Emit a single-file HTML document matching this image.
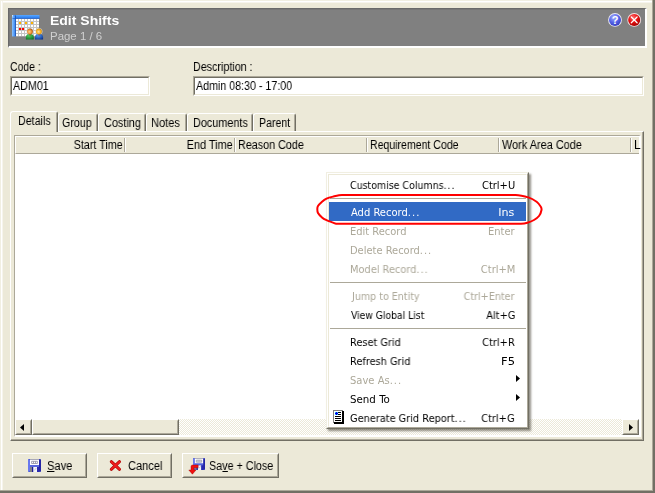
<!DOCTYPE html>
<html lang="en"><head><meta charset="utf-8"><title>Edit Shifts</title>
<style>
html,body{margin:0;padding:0}
body{width:655px;height:493px;background:#ece9d8;position:relative;overflow:hidden;font-family:'Liberation Sans', sans-serif;font-size:12px;color:#000}
.a{position:absolute}
.t{position:absolute;white-space:nowrap;line-height:normal;display:block;transform-origin:0 0;will-change:transform}
.t.r{transform-origin:100% 0}
.s11{font-size:11px}.s13{font-size:13px;font-weight:bold}
.tah{font-family:'DejaVu Sans Condensed', 'DejaVu Sans', 'Liberation Sans', sans-serif;font-size:11px}
.t i{font-style:normal;letter-spacing:1px;margin-right:-1px}
.t u{text-decoration:none;position:relative}
.t u:after{content:"";position:absolute;left:0;right:0;top:12px;height:1px;background:#000}
.sunk{position:absolute;background:#fff;box-sizing:border-box;border:1px solid;border-color:#aca899 #fff #fff #aca899}
.sunk:before{content:"";position:absolute;left:0;top:0;right:0;bottom:0;border:1px solid;border-color:#716f64 #ece9d8 #ece9d8 #716f64}
.btn{position:absolute;box-sizing:border-box;height:25px;top:453px;background:#ece9d8;border:1px solid;border-color:#fff #716f64 #716f64 #fff}
.btn:before{content:"";position:absolute;left:0;top:0;right:0;bottom:0;border:1px solid;border-color:#ece9d8 #aca899 #aca899 #ece9d8}
.tab{position:absolute;box-sizing:border-box;background:#ece9d8;border-top:1px solid #fff;border-left:1px solid #fff;border-right:1px solid #716f64;border-radius:3px 3px 0 0}
.tab:before{content:"";position:absolute;top:1px;bottom:0;right:0;width:1px;background:#aca899}
.sep{position:absolute;top:138px;width:1px;height:14px;background:#aca899;box-shadow:1px 0 0 #fff}
.msep{position:absolute;left:330px;width:196px;height:1px;background:#aca899}
.chk{background-color:#fff;background-image:linear-gradient(45deg,#ece9d8 25%,transparent 25%,transparent 75%,#ece9d8 75%),linear-gradient(45deg,#ece9d8 25%,transparent 25%,transparent 75%,#ece9d8 75%);background-size:2px 2px;background-position:0 0,1px 1px}
</style></head><body>
<!-- window frame -->
<div class="a" style="left:0;top:0;width:655px;height:1px;background:#f1efe2"></div>
<div class="a" style="left:0;top:0;width:1px;height:493px;background:#f1efe2"></div>
<div class="a" style="left:1px;top:1px;width:654px;height:2px;background:linear-gradient(#fff 50%,#f6f4ec 50%)"></div>
<div class="a" style="left:1px;top:1px;width:2px;height:492px;background:linear-gradient(90deg,#fff 50%,#f6f4ec 50%)"></div>
<div class="a" style="left:652px;top:0;width:1px;height:493px;background:#aca899"></div>
<div class="a" style="left:653px;top:0;width:2px;height:493px;background:#716f64"></div>
<div class="a" style="left:0;top:490px;width:653px;height:1px;background:#aca899"></div>
<div class="a" style="left:0;top:491px;width:655px;height:2px;background:#716f64"></div>

<!-- header -->
<div class="a" id="hdr" style="left:8px;top:8px;width:639px;height:40px;box-sizing:border-box;background:#808080;border-style:solid;border-width:1px 2px 2px 1px;border-color:#696969 #fff #fff #696969;box-shadow:inset 1px 1px 0 #777"></div>
<svg class="a" style="left:12px;top:15px" width="32" height="26" viewBox="0 0 32 26">
  <defs>
    <linearGradient id="cb" x1="0" y1="0" x2="1" y2="0"><stop offset="0" stop-color="#8cc4ff"/><stop offset="1" stop-color="#2f7ff0"/></linearGradient>
    <linearGradient id="ct" x1="0" y1="0" x2="0" y2="1"><stop offset="0" stop-color="#5aa8ff"/><stop offset="1" stop-color="#1f74ee"/></linearGradient>
    <radialGradient id="pg" cx="0.4" cy="0.3" r="0.8"><stop offset="0" stop-color="#4cd060"/><stop offset="1" stop-color="#0c6c20"/></radialGradient>
    <radialGradient id="pb" cx="0.4" cy="0.3" r="0.8"><stop offset="0" stop-color="#4c98f0"/><stop offset="1" stop-color="#0c3088"/></radialGradient>
    <radialGradient id="h1g" cx="0.4" cy="0.55" r="0.6"><stop offset="0" stop-color="#ffd090"/><stop offset="0.6" stop-color="#e89030"/><stop offset="1" stop-color="#a85010"/></radialGradient>
    <radialGradient id="h2g" cx="0.45" cy="0.55" r="0.6"><stop offset="0" stop-color="#ffe0a0"/><stop offset="0.6" stop-color="#f4b020"/><stop offset="1" stop-color="#c88000"/></radialGradient>
  </defs>
  <rect x="0" y="0" width="27.5" height="22" fill="#7a7a7a"/>
  <rect x="3" y="3" width="24" height="18.5" fill="#c4c4c4"/>
  <rect x="0" y="0" width="27.5" height="3.5" fill="url(#ct)"/>
  <rect x="0" y="0" width="3.5" height="21.5" fill="url(#cb)"/>
  <rect x="0" y="0" width="1" height="1.5" fill="#c8e4ff"/>
  <rect x="3" y="0.5" width="0.8" height="21" fill="#1450b8"/>
  <rect x="0.5" y="3" width="27" height="0.8" fill="#1450b8" opacity=".7"/>
  <g fill="#fff"><rect x="4" y="4" width="2" height="2"/><rect x="7" y="4" width="2" height="2"/><rect x="10" y="4" width="2" height="2"/><rect x="13" y="4" width="2" height="2"/><rect x="16" y="4" width="2" height="2"/><rect x="19" y="4" width="2" height="2"/><rect x="22" y="4" width="2" height="2"/><rect x="25" y="4" width="2" height="2"/><rect x="4" y="7" width="2" height="2"/><rect x="10" y="7" width="2" height="2"/><rect x="16" y="7" width="2" height="2"/><rect x="22" y="7" width="2" height="2"/><rect x="25" y="7" width="2" height="2"/><rect x="4" y="10" width="2" height="2"/><rect x="7" y="10" width="2" height="2"/><rect x="10" y="10" width="2" height="2"/><rect x="13" y="10" width="2" height="2"/><rect x="16" y="10" width="2" height="2"/><rect x="19" y="10" width="2" height="2"/><rect x="22" y="10" width="2" height="2"/><rect x="25" y="10" width="2" height="2"/><rect x="4" y="13" width="2" height="2"/><rect x="13" y="13" width="2" height="2"/><rect x="16" y="13" width="2" height="2"/><rect x="19" y="13" width="2" height="2"/><rect x="22" y="13" width="2" height="2"/><rect x="25" y="13" width="2" height="2"/><rect x="4" y="16" width="2" height="2"/><rect x="7" y="16" width="2" height="2"/><rect x="10" y="16" width="2" height="2"/><rect x="13" y="16" width="2" height="2"/><rect x="16" y="16" width="2" height="2"/><rect x="19" y="16" width="2" height="2"/><rect x="22" y="16" width="2" height="2"/><rect x="25" y="16" width="2" height="2"/><rect x="4" y="19" width="2" height="2"/><rect x="7" y="19" width="2" height="2"/><rect x="10" y="19" width="2" height="2"/><rect x="13" y="19" width="2" height="2"/><rect x="16" y="19" width="2" height="2"/><rect x="19" y="19" width="2" height="2"/><rect x="22" y="19" width="2" height="2"/><rect x="25" y="19" width="2" height="2"/></g>
  <g fill="#ffb400"><rect x="7" y="7" width="2" height="2"/><rect x="13" y="7" width="2" height="2"/><rect x="19" y="7" width="2" height="2"/></g>
  <g fill="#f00"><rect x="7" y="13" width="2" height="2"/><rect x="10" y="13" width="2" height="2"/></g>
  <!-- people -->
  <circle cx="18" cy="16.5" r="3.6" fill="#d8d8d8" opacity=".8"/>
  <circle cx="26.9" cy="16.5" r="3.6" fill="#d8d8d8" opacity=".8"/>
  <path d="M13.9 24.6 V22 Q13.9 19 18 19 Q21.8 19 21.8 22 V24.6 Z" fill="url(#pg)"/>
  <path d="M23 24.6 V22 Q23 19 27 19 Q31.1 19 31.1 22 V24.6 Z" fill="url(#pb)"/>
  <path d="M17.4 19.2 L18 21.4 L18.6 19.2 Z" fill="#d02010"/>
  <path d="M26.4 19.2 L27 21.4 L27.6 19.2 Z" fill="#d02010"/>
  <circle cx="18" cy="16.5" r="2.9" fill="url(#h1g)"/>
  <circle cx="26.9" cy="16.5" r="2.9" fill="url(#h2g)"/>
</svg>
<!-- help / close -->
<svg class="a" style="left:607px;top:12px" width="36" height="16" viewBox="0 0 36 16">
  <defs>
    <radialGradient id="gb" cx="0.4" cy="0.3" r="0.75"><stop offset="0" stop-color="#a4aeff"/><stop offset="0.55" stop-color="#5664e8"/><stop offset="1" stop-color="#343cbc"/></radialGradient>
    <radialGradient id="gr" cx="0.4" cy="0.3" r="0.75"><stop offset="0" stop-color="#ff7070"/><stop offset="0.5" stop-color="#e81010"/><stop offset="1" stop-color="#a00000"/></radialGradient>
  </defs>
  <circle cx="8" cy="7.9" r="6.9" fill="#e8e8f4"/>
  <circle cx="8" cy="7.9" r="6" fill="url(#gb)"/>
  <text x="8" y="12" text-anchor="middle" font-family="'Liberation Sans', sans-serif" font-weight="bold" font-size="11" fill="#fff">?</text>
  <circle cx="27.2" cy="7.9" r="6.9" fill="#f0e0e0"/>
  <circle cx="27.2" cy="7.9" r="6" fill="url(#gr)"/>
  <path d="M24.3 5 L30.1 10.8 M30.1 5 L24.3 10.8" stroke="#fff" stroke-width="1.25" stroke-linecap="round"/>
</svg>

<!-- inputs -->
<div class="sunk" style="left:10px;top:76px;width:140px;height:20px"></div>
<div class="sunk" style="left:193px;top:76px;width:451px;height:20px"></div>

<!-- tab panel -->
<div class="a" id="panel" style="left:10px;top:131px;width:634px;height:310px;box-sizing:border-box;border:1px solid;border-color:#fff #716f64 #716f64 #fff"></div>
<div class="a" style="left:11px;top:439px;width:632px;height:1px;background:#aca899"></div>
<div class="a" style="left:642px;top:132px;width:1px;height:308px;background:#aca899"></div>
<!-- tabs -->
<div class="tab" style="left:58px;top:113px;width:40px;height:18px"></div>
<div class="tab" style="left:98px;top:113px;width:48px;height:18px"></div>
<div class="tab" style="left:146px;top:113px;width:41px;height:18px"></div>
<div class="tab" style="left:187px;top:113px;width:66px;height:18px"></div>
<div class="tab" style="left:253px;top:113px;width:43px;height:18px"></div>
<div class="tab" style="left:10px;top:111px;width:48px;height:21px"></div>

<!-- grid -->
<div class="a" id="grid" style="left:14px;top:135px;width:627px;height:302px;box-sizing:border-box;background:#fff;border-style:solid;border-width:1px 2px 2px 1px;border-color:#aca899 #fff #fff #aca899"></div>
<div class="a" style="left:15px;top:136px;width:624px;height:18px;box-sizing:border-box;background:#ece9d8;border-top:1px solid #fff;border-left:1px solid #fff;border-bottom:1px solid #aca899"></div>
<div class="sep" style="left:124px"></div>
<div class="sep" style="left:234px"></div>
<div class="sep" style="left:366px"></div>
<div class="sep" style="left:498px"></div>
<div class="sep" style="left:630px"></div>
<!-- scrollbar -->
<div class="a chk" style="left:15px;top:419px;width:624px;height:16px"></div>
<div class="btn" style="left:15px;top:419px;width:17px;height:16px"></div>
<div class="btn" style="left:32px;top:419px;width:147px;height:16px"></div>
<div class="btn" style="left:622px;top:419px;width:17px;height:16px"></div>
<svg class="a" style="left:20px;top:424px" width="4" height="7" viewBox="0 0 4 7"><path d="M4 0 L4 7 L0 3.5 Z" fill="#000"/></svg>
<svg class="a" style="left:629px;top:424px" width="4" height="7" viewBox="0 0 4 7"><path d="M0 0 L0 7 L4 3.5 Z" fill="#000"/></svg>

<!-- buttons -->
<div class="btn" style="left:12px;width:75px"></div>
<div class="btn" style="left:97px;width:75px"></div>
<div class="btn" style="left:182px;width:97px"></div>
<!-- save icon -->
<svg class="a" style="left:28px;top:459px" width="13" height="13" viewBox="0 0 13 13">
  <rect x="0" y="0" width="13" height="13" rx="1.2" fill="#3c4acc"/>
  <rect x="0" y="0.6" width="2" height="11.8" fill="#6878ee"/>
  <rect x="11" y="0.6" width="2" height="11.8" fill="#2626a6"/>
  <rect x="2" y="0" width="9" height="6" fill="#fff"/>
  <rect x="2" y="0" width="9" height="0.9" fill="#a0a0b0"/>
  <path d="M3.6 2.3 H9.4 V4.5 H3.6 Z M5.5 2.3 V4.5 M7.5 2.3 V4.5" fill="none" stroke="#8e8ea2" stroke-width="0.8"/>
  <rect x="2" y="6" width="9" height="2" fill="#5666dc"/>
  <rect x="2" y="8" width="2" height="5" fill="#80808a"/>
  <rect x="4" y="8" width="1.3" height="5" fill="#1c1c94"/>
  <rect x="5.3" y="8" width="3.7" height="5" fill="#f4f4f8"/>
  <path d="M6.2 11.5 L8.3 9" stroke="#b0b0c0" stroke-width="0.7"/>
  <rect x="9" y="8" width="2" height="5" fill="#2a2ab0"/>
</svg>
<!-- cancel icon -->
<svg class="a" style="left:109px;top:459px" width="13" height="13" viewBox="0 0 13 13">
  <path d="M2.3 2.7 L10.5 10.3 M10.5 2.7 L2.3 10.3" stroke="#a80000" stroke-width="3" stroke-linecap="round"/>
  <path d="M2.3 2.7 L10.5 10.3 M10.5 2.7 L2.3 10.3" stroke="#ee1c1c" stroke-width="1.9" stroke-linecap="round"/>
</svg>
<!-- save+close icon -->
<svg class="a" style="left:188px;top:458px" width="18" height="17" viewBox="0 0 18 17">
  <g transform="translate(5,0) scale(0.923)">
  <rect x="0" y="0" width="13" height="13" rx="1.2" fill="#3c4acc"/>
  <rect x="0" y="0.6" width="2" height="11.8" fill="#6878ee"/>
  <rect x="11" y="0.6" width="2" height="11.8" fill="#2626a6"/>
  <rect x="2" y="0" width="9" height="6" fill="#fff"/>
  <rect x="2" y="0" width="9" height="0.9" fill="#a0a0b0"/>
  <path d="M3.6 2.3 H9.4 V4.5 H3.6 Z M5.5 2.3 V4.5 M7.5 2.3 V4.5" fill="none" stroke="#8e8ea2" stroke-width="0.8"/>
  <rect x="2" y="6" width="9" height="2" fill="#5666dc"/>
  <rect x="2" y="8" width="2" height="5" fill="#80808a"/>
  <rect x="4" y="8" width="1.3" height="5" fill="#1c1c94"/>
  <rect x="5.3" y="8" width="3.7" height="5" fill="#f4f4f8"/>
  <path d="M6.2 11.5 L8.3 9" stroke="#b0b0c0" stroke-width="0.7"/>
  <rect x="9" y="8" width="2" height="5" fill="#2a2ab0"/>
  </g>
  <path d="M10.2 7 H4.5 Q3 7 3 8.5 V12 H0.8 L4.4 16.2 L8 12 H6 V9.8 H10.2 Z" fill="#f01010" stroke="#a00000" stroke-width="0.4"/>
</svg>

<!-- popup menu -->
<div class="a" id="menu" style="left:326px;top:172px;width:203px;height:257px;box-sizing:border-box;background:#fff;border:1px solid;border-color:#f1efe2 #716f64 #716f64 #f1efe2;box-shadow:2px 2px 2px rgba(60,55,40,.55)">
  <div class="a" style="left:0;top:0;right:0;bottom:0;border:1px solid;border-color:#fff #aca899 #aca899 #fff"></div>
  <div class="a" style="left:1px;top:1px;right:1px;bottom:1px;border:1px solid #ece9d8;border-right-color:#fff;border-bottom-color:#fff"></div>
</div>
<div class="a" style="left:329px;top:202px;width:197px;height:19px;background:#316ac5"></div>
<div class="msep" style="top:198px"></div>
<div class="msep" style="top:282px"></div>
<div class="msep" style="top:328px"></div>
<svg class="a" style="left:516px;top:375px" width="4" height="7" viewBox="0 0 4 7"><path d="M0 0 L0 7 L4 3.5 Z" fill="#000"/></svg>
<svg class="a" style="left:516px;top:394px" width="4" height="7" viewBox="0 0 4 7"><path d="M0 0 L0 7 L4 3.5 Z" fill="#000"/></svg>
<!-- report icon -->
<svg class="a" style="left:333px;top:410px" width="11" height="14" viewBox="0 0 11 14">
  <rect x="1" y="1" width="10" height="13" fill="#000"/>
  <rect x="0" y="0" width="10" height="13" fill="#808080"/>
  <rect x="1" y="1" width="8" height="11" fill="#fff"/>
  <rect x="9" y="1" width="1" height="12" fill="#000"/><rect x="1" y="12" width="9" height="1" fill="#000"/>
  <g fill="#000"><rect x="5" y="2" width="3" height="1"/><rect x="5" y="4" width="3" height="1"/><rect x="2" y="6" width="6" height="1"/><rect x="2" y="8" width="6" height="1"/><rect x="2" y="10" width="6" height="1"/></g>
  <rect x="2" y="2" width="3" height="3" fill="#20c0ff"/><rect x="3" y="2" width="1" height="3" fill="#0000e0"/><rect x="2" y="3" width="3" height="1" fill="#0000e0"/>
</svg>
<!-- red highlight ellipse -->
<svg class="a" style="left:314px;top:192px" width="230" height="35" viewBox="0 0 230 35">
  <path d="M28 2.9 L120 2.9 L201.6 2.9 C205.6 2.9 212.2 4.7 215 5.6 C217.8 6.5 221.0 8.6 222.6 9.8 C224.2 11.0 226.1 13.7 226.8 14.8 C227.5 15.9 227.7 16.8 227.5 18 C227.3 19.2 226.0 22.7 225 24 C224.0 25.3 221.5 27.1 220 28 C218.5 28.9 215.1 30.3 213.4 30.8 C211.7 31.3 208.9 31.7 207 31.7 L120 31.7 L22 31.7 C21.1 31.7 20.3 31.1 19 30.6 C17.7 30.1 14.0 28.9 12.5 28.2 C11.0 27.5 9.1 26.5 8 25.5 C6.9 24.5 4.6 22.1 4 21 C3.4 19.9 3.3 17.9 3.3 17 C3.3 16.1 3.4 15.0 4 14 C4.6 13.0 6.9 10.8 8 9.8 C9.1 8.8 11.0 7.3 12.5 6.6 C14.0 5.9 16.9 5.1 19 4.6 C21.1 4.1 25.3 2.9 28 2.9 Z" fill="none" stroke="#f00" stroke-width="2" stroke-linejoin="round"/>
</svg>

<span class="t s13" id="title" style="left:50px;top:13px;color:#fff;transform:scaleX(1.076)">Edit Shifts</span>
<span class="t s11" id="page" style="left:50px;top:30px;color:#d0d0d0;transform:scaleX(1.041)">Page 1 / 6</span>
<span class="t" id="lcode" style="left:10px;top:60px;transform:scaleX(0.870)">Code :</span>
<span class="t" id="ldesc" style="left:193px;top:60px;transform:scaleX(0.894)">Description :</span>
<span class="t" id="vcode" style="left:13px;top:79px;transform:scaleX(0.893)">ADM01</span>
<span class="t" id="vdesc" style="left:196px;top:79px;transform:scaleX(0.889)">Admin 08:30 - 17:00</span>
<span class="t" id="tab1" style="left:18px;top:114px;transform:scaleX(0.892)">Details</span>
<span class="t" id="tab2" style="left:62px;top:116px;transform:scaleX(0.890)">Group</span>
<span class="t" id="tab3" style="left:104px;top:116px;transform:scaleX(0.907)">Costing</span>
<span class="t" id="tab4" style="left:151px;top:116px;transform:scaleX(0.923)">Notes</span>
<span class="t" id="tab5" style="left:193px;top:116px;transform:scaleX(0.904)">Documents</span>
<span class="t" id="tab6" style="left:259px;top:116px;transform:scaleX(0.882)">Parent</span>
<span class="t r" id="h1" style="right:532px;top:138px;transform:scaleX(0.896)">Start Time</span>
<span class="t r" id="h2" style="right:422px;top:138px;transform:scaleX(0.908)">End Time</span>
<span class="t" id="h3" style="left:238px;top:138px;transform:scaleX(0.897)">Reason Code</span>
<span class="t" id="h4" style="left:370px;top:138px;transform:scaleX(0.879)">Requirement Code</span>
<span class="t" id="h5" style="left:502px;top:138px;transform:scaleX(0.909)">Work Area Code</span>
<span class="t" id="h6" style="left:634px;top:138px">L</span>
<span class="t" id="b1" style="left:47px;top:459px;transform:scaleX(0.927)"><u>S</u>ave</span>
<span class="t" id="b2" style="left:128px;top:459px;transform:scaleX(0.922)">Cancel</span>
<span class="t" id="b3" style="left:209px;top:459px;transform:scaleX(0.896)">Sa<u>v</u>e + Close</span>
<span class="t tah" id="m0" style="left:350px;top:179px;transform:scaleX(0.953)">Customise Columns<i>...</i></span>
<span class="t tah r" id="k0" style="right:140px;top:179px">Ctrl+U</span>
<span class="t tah" id="m1" style="left:351px;top:206px;color:#fff;transform:scaleX(1.007)">Add Record<i>...</i></span>
<span class="t tah r" id="k1" style="right:141px;top:206px;color:#fff;transform:scaleX(1.123)">Ins</span>
<span class="t tah" id="m2" style="left:350px;top:225px;color:#aca899;transform:scaleX(0.992)">Edit Record</span>
<span class="t tah r" id="k2" style="right:140px;top:225px;color:#aca899">Enter</span>
<span class="t tah" id="m3" style="left:350px;top:244px;color:#aca899;transform:scaleX(0.996)">Delete Record<i>...</i></span>
<span class="t tah" id="m4" style="left:350px;top:263px;color:#aca899;transform:scaleX(0.991)">Model Record<i>...</i></span>
<span class="t tah r" id="k4" style="right:140px;top:263px;color:#aca899;transform:scaleX(1.004)">Ctrl+M</span>
<span class="t tah" id="m5" style="left:352px;top:290px;color:#aca899;transform:scaleX(0.963)">Jump to Entity</span>
<span class="t tah r" id="k5" style="right:141px;top:290px;color:#aca899;transform:scaleX(0.969)">Ctrl+Enter</span>
<span class="t tah" id="m6" style="left:351px;top:309px;transform:scaleX(0.932)">View Global List</span>
<span class="t tah r" id="k6" style="right:140px;top:309px;transform:scaleX(0.989)">Alt+G</span>
<span class="t tah" id="m7" style="left:350px;top:336px;transform:scaleX(0.986)">Reset Grid</span>
<span class="t tah r" id="k7" style="right:140px;top:336px;transform:scaleX(0.995)">Ctrl+R</span>
<span class="t tah" id="m8" style="left:350px;top:355px;transform:scaleX(0.988)">Refresh Grid</span>
<span class="t tah r" id="k8" style="right:140px;top:355px;transform:scaleX(1.160)">F5</span>
<span class="t tah" id="m9" style="left:350px;top:374px;color:#aca899;transform:scaleX(1.008)">Save As<i>...</i></span>
<span class="t tah" id="m10" style="left:350px;top:393px;transform:scaleX(1.038)">Send To</span>
<span class="t tah" id="m11" style="left:350px;top:412px;transform:scaleX(0.986)">Generate Grid Report<i>...</i></span>
<span class="t tah r" id="k11" style="right:140px;top:412px;transform:scaleX(0.994)">Ctrl+G</span>

</body></html>
